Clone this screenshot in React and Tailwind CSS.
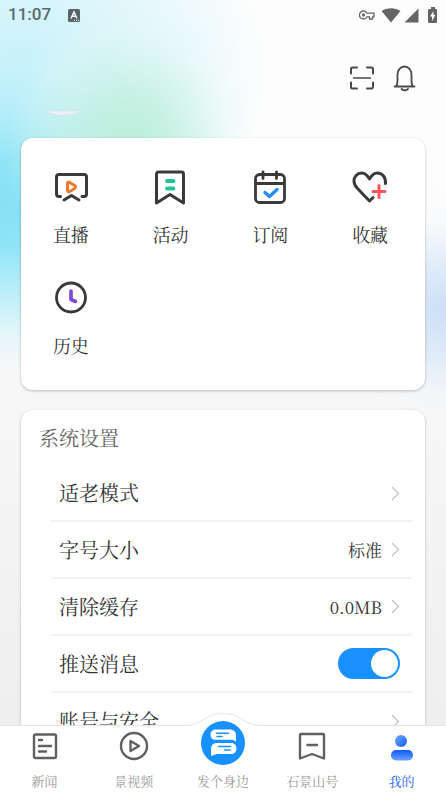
import { useState } from 'react';

const FONT = "font-['Noto_Serif_CJK_SC','Liberation_Serif','Noto_Sans_CJK_SC',serif]";

const stroke = {
    fill: 'none',
    strokeLinecap: 'round',
    strokeLinejoin: 'round',
};

const LiveIcon = () => (
    <svg viewBox="0 0 36 36" className="w-9 h-9" {...stroke} stroke="#3a3a3a" strokeWidth="3">
        <path d="M7.500 27.500H6a2.500 2.500 0 0 1-2.500-2.500V8A2.500 2.500 0 0 1 6 5.500h25A2.500 2.500 0 0 1 33.500 8v17a2.500 2.500 0 0 1-2.500 2.500h-2" />
        <path d="M11 31 18.500 26.500 26 31" />
        <path d="M14.500 14v7.400c0 1.300 1 1.800 2.200 1.200l5-3.200c1.200-.8 1.200-2 0-2.800l-5-3.200c-1.200-.8-2.200-.300-2.200.6z" stroke="#f07a2c" />
    </svg>
);

const ActivityIcon = () => (
    <svg viewBox="0 0 36 36" className="w-9 h-9" {...stroke} stroke="#3a3a3a" strokeWidth="3">
        <path d="M5.500 3h23a2 2 0 0 1 2 2v29L17 25.500 3.500 34V5a2 2 0 0 1 2-2z" />
        <path d="M14 12h6.500M14 19.500h6.500" stroke="#1bc79a" strokeWidth="3.800" />
    </svg>
);

const SubscribeIcon = () => (
    <svg viewBox="0 0 36 36" className="w-9 h-9" {...stroke} stroke="#3a3a3a" strokeWidth="2.800">
        <rect x="3.500" y="5.500" width="29" height="28" rx="4" />
        <path d="M4 14.500h28M11 3v6.500M24.500 3v6.500" />
        <path d="m13 23.500 4.500 4 7.500-7" stroke="#2a8df5" strokeWidth="3.400" />
    </svg>
);

const FavoriteIcon = () => (
    <svg viewBox="0 0 36 36" className="w-9 h-9" {...stroke} stroke="#3a3a3a" strokeWidth="3">
        <path d="M33.500 14.500c.4-6-3-10.500-8.300-10.500-3.200 0-5.700 2.500-7.700 6-2-3.500-4.500-6-7.800-6C5 4 2 7.700 2 12c0 3 1.300 5.200 3.300 7.300L17.500 32l3.500-3.500" />
        <path d="M27 16.500v12M21 22.500h12" stroke="#f8565c" />
    </svg>
);

const HistoryIcon = () => (
    <svg viewBox="0 0 36 36" className="w-9 h-9" {...stroke} stroke="#3a3a3a" strokeWidth="2.800">
        <circle cx="18" cy="17.500" r="14.500" />
        <path d="M18 11v8.500l4.500 2" stroke="#7a4ad9" strokeWidth="3.600" />
    </svg>
);

const shortcuts = [
    { name: '直播', icon: LiveIcon },
    { name: '活动', icon: ActivityIcon },
    { name: '订阅', icon: SubscribeIcon },
    { name: '收藏', icon: FavoriteIcon },
    { name: '历史', icon: HistoryIcon },
];

const NewsIcon = () => (
    <svg viewBox="0 0 30 30" className="w-[30px] h-[30px]" {...stroke} stroke="#606060" strokeWidth="2.400">
        <rect x="4" y="3.500" width="22" height="23.500" rx="1.500" />
        <path d="M9 9h3M9 15h12M9 20.500h7" />
    </svg>
);

const VideoIcon = () => (
    <svg viewBox="0 0 30 30" className="w-[30px] h-[30px]" {...stroke} stroke="#606060" strokeWidth="2.400">
        <circle cx="15" cy="15" r="13" />
        <path d="M11.500 10v10l8.500-5z" />
    </svg>
);

const PostIcon = () => (
    <svg viewBox="0 0 44 44" className="w-11 h-11 -mt-5 -mb-[4px]">
        <circle cx="22" cy="22" r="22" fill="#1890ff" />
        <path d="M14.500 8.500h14C33 8.500 35 11 35 14v6.500L31.500 18.800H14.500c-3 0-5-2.200-5-5.100s2-5.200 5-5.200z" fill="#fff" />
        <path d="M16 22h14.500c3 0 5 2.500 5 5.500S33.500 33 30.500 33H15.500L10 35v-7c0-4 2.500-6 6-6z" fill="#fff" />
        <path d="M15.500 12.200h12M16 15.500h5M17.500 25.500h12M23.500 29h5.500" fill="none" stroke="#1890ff" strokeWidth="1.500" strokeLinecap="round" />
    </svg>
);

const AccountIcon = () => (
    <svg viewBox="0 0 30 30" className="w-[30px] h-[30px]" {...stroke} stroke="#606060" strokeWidth="2.400">
        <path d="M4 3h22a1 1 0 0 1 1 1v23.500L15 23 3 27.500V4a1 1 0 0 1 1-1z" />
        <path d="M10.500 14h9.500" />
    </svg>
);

const MineIcon = () => (
    <svg viewBox="0 0 30 30" className="w-[30px] h-[30px]">
        <defs>
            <linearGradient id="head" x1="0" y1="0" x2="1" y2="1">
                <stop offset="0" stopColor="#7aa8ff" />
                <stop offset="1" stopColor="#0a5cf5" />
            </linearGradient>
            <linearGradient id="body" x1="0" y1="0" x2="0" y2="1">
                <stop offset="0" stopColor="#0a5cf5" />
                <stop offset="1" stopColor="#6ea0ff" />
            </linearGradient>
        </defs>
        <circle cx="15" cy="10" r="6" fill="url(#head)" />
        <rect x="5" y="19" width="22" height="10.500" rx="5" fill="url(#body)" />
    </svg>
);

const tabs = [
    { name: '新闻', icon: NewsIcon },
    { name: '景视频', icon: VideoIcon },
    { name: '发个身边', icon: PostIcon },
    { name: '石景山号', icon: AccountIcon },
    { name: '我的', icon: MineIcon, active: true },
];

const Chevron = () => (
    <svg viewBox="0 0 10 16" className="w-[10px] h-4" fill="none" stroke="#c0c0c0" strokeWidth="1.200">
        <path d="m2 2 6.500 6.500L2 15" />
    </svg>
);

function StatusBar() {
    return (
        <div className="flex items-center justify-between h-[30px] px-2">
            <div className="flex items-center gap-[17px] font-[Roboto,sans-serif] text-[17px] font-medium text-[#5a696e]">
                <span>11:07</span>
                <svg viewBox="0 0 12 13" className="w-3 h-[13px]">
                    <rect width="12" height="13" rx="1.500" fill="#56656a" />
                    <path d="m3 9.500 3-6.500 3 6.500M4.200 7.300h3.600" fill="none" stroke="#fff" strokeWidth="1.400" />
                    <path d="M6 11.300h1M8 11.300h1M10 11.300h1" stroke="#fff" />
                </svg>
            </div>
            <div className="flex items-center text-[#646464]">
                <svg viewBox="0 0 16 10" className="w-4 h-[10px] mr-[6px]" fill="none" stroke="currentColor" strokeWidth="1.300">
                    <path d="M8 3.200A4 4 0 1 0 8 6.800h2.500V9h3V6.800H15V3.200z" />
                    <circle cx="4.500" cy="5" r="1" />
                </svg>
                <svg viewBox="0 0 20 16" className="w-5 h-4 mr-[3px]" fill="currentColor">
                    <path d="M.5 4C6 .2 14 .2 19.500 4L10 15.500z" />
                </svg>
                <svg viewBox="0 0 15 15" className="w-[15px] h-[15px] mr-[9px]" fill="currentColor">
                    <path d="M14.500.5v14H.5z" />
                </svg>
                <svg viewBox="0 0 10 17" className="w-[10px] h-[17px]">
                    <path d="M3 0h4v2h1a1 1 0 0 1 1 1v12a1 1 0 0 1-1 1H1a1 1 0 0 1-1-1V3a1 1 0 0 1 1-1h2z" fill="currentColor" />
                    <path d="M5.500 4 2 9.500H4v4.500L7.500 8H5.500z" fill="#fff" />
                </svg>
            </div>
        </div>
    );
}

function SettingRow({ label, htmlFor, children }) {
    return (
        <li className="flex items-center justify-between h-[57px] pl-2 pr-3 border-b-2 border-[#f2f2f2]">
            {htmlFor ? <label htmlFor={htmlFor}>{label}</label> : <span>{label}</span>}
            {children}
        </li>
    );
}

const LinkValue = ({ label, value }) => (
    <button type="button" aria-label={label} className="flex items-center gap-2 text-[17px]">
        {value}
        <Chevron />
    </button>
);

export default function App() {
    const [push, setPush] = useState(true);

    return (
        <div className={`relative h-screen flex flex-col overflow-hidden text-[#333] bg-linear-to-b from-[#fdfdfd] from-20% to-[#ededed] ${FONT}`}>
            {/* soft colour glows behind the cards */}
            <div className="absolute inset-x-0 top-0 h-[480px] bg-[radial-gradient(ellipse_125px_140px_at_130px_145px,#bcefda_0%,#bfefdccc_30%,#cbf2e490_55%,#e0f7f040_80%,#f0fbf600_100%),radial-gradient(ellipse_230px_170px_at_0px_205px,#86e0f5_0%,#90e4f6_25%,#a8eaf8b0_55%,#c8f2fb50_80%,#e0f7fd00_100%),radial-gradient(ellipse_110px_110px_at_100%_310px,#cbdff7_0%,#d6e6f8aa_45%,#e4effa40_75%,#eef4fa00_100%),radial-gradient(ellipse_250px_220px_at_20px_70px,#c6f1fb_0%,#d4f4fbaa_50%,#e8f8fd00_100%)]"></div>

            <div className="relative">
                <StatusBar />
                <header className="flex justify-end gap-[14px] pt-[34px] pr-7">
                    <button type="button" aria-label="扫一扫">
                        <svg viewBox="0 0 28 28" className="w-7 h-7" {...stroke} stroke="#484848" strokeWidth="2">
                            <path d="M3 9.500V5a1.500 1.500 0 0 1 1.500-1.500H9M19 3.500h4.500A1.500 1.500 0 0 1 25 5v4.500M25 18.500V23a1.500 1.500 0 0 1-1.500 1.500H19M9 24.500H4.500A1.500 1.500 0 0 1 3 23v-4.500" />
                            <path d="M5.500 14h17" strokeWidth="1.300" />
                        </svg>
                    </button>
                    <button type="button" aria-label="消息">
                        <svg viewBox="0 0 28 28" className="w-7 h-7" {...stroke} stroke="#484848" strokeWidth="1.800">
                            <path d="M4.500 22.500h20M6.500 22c1-2 1-4 1-6v-5.500a7 8 0 0 1 14 0V16c0 2 0 4 1 6" />
                            <path d="M11.500 25c2 1.700 4.500 1.700 6.500 0" />
                        </svg>
                    </button>
                </header>
                {/* lower edge of the scrolled avatar */}
                <svg viewBox="0 0 38 6" className="w-[38px] h-[6px] ml-11 mt-[18px]">
                    <path d="M0 1h38C28 6.500 10 6.500 0 1z" fill="#eceef8" stroke="#d5dde4" strokeWidth=".5" />
                </svg>
            </div>

            <main className="relative flex-1 min-h-0 overflow-hidden px-[21px] pt-[22px]">
                <section className="grid grid-cols-4 gap-y-[30px] bg-white rounded-xl pt-[31px] pb-[29px] pr-[5px] shadow-[0_1px_3px_rgba(0,0,0,0.25)]">
                    {shortcuts.map(({ name, icon: Icon }) => (
                        <button key={name} type="button" className="flex flex-col items-center gap-[13px] text-lg leading-8">
                            <Icon />
                            {name}
                        </button>
                    ))}
                </section>

                <section className="mt-5 bg-white rounded-xl pt-3 shadow-[0_1px_3px_rgba(0,0,0,0.25)]">
                    <h2 className="pl-[18px] mb-[11px] text-xl leading-8 text-[#666]">系统设置</h2>
                    <ul className="ml-[30px] mr-[13px] text-xl">
                        <SettingRow label="适老模式">
                            <LinkValue label="适老模式" />
                        </SettingRow>
                        <SettingRow label="字号大小">
                            <LinkValue label="字号大小" value="标准" />
                        </SettingRow>
                        <SettingRow label="清除缓存">
                            <LinkValue label="清除缓存" value="0.0MB" />
                        </SettingRow>
                        <SettingRow label="推送消息" htmlFor="push">
                            <input
                                id="push"
                                type="checkbox"
                                role="switch"
                                checked={push}
                                onChange={(e) => setPush(e.target.checked)}
                                className="flex items-center appearance-none w-[62px] h-[31px] p-[2px] rounded-full bg-[#ccc] checked:bg-[#1890ff] checked:justify-end before:w-[27px] before:h-[27px] before:rounded-full before:bg-white"
                            />
                        </SettingRow>
                        <SettingRow label="账号与安全">
                            <LinkValue label="账号与安全" />
                        </SettingRow>
                    </ul>
                </section>
            </main>

            <nav className="relative grid grid-cols-5 h-[67px] bg-white border-t border-[#e6e6e6]">
                {/* hump behind the middle tab */}
                <svg viewBox="0 0 76 16" className="absolute left-1/2 -translate-x-1/2 -top-[13px] w-[76px] h-4">
                    <path d="M0 13C18 12 20 1 38 1s20 11 38 12v3H0z" fill="#fff" />
                    <path d="M0 12.500C18 12 20 .5 38 .5s20 11.500 38 12" fill="none" stroke="#e6e6e6" />
                </svg>
                {tabs.map(({ name, icon: Icon, active }) => (
                    <a
                        key={name}
                        href="#"
                        className={`relative flex flex-col items-center justify-end gap-[10px] pb-[1px] text-[13px] leading-5 ${active ? 'text-[#1763f0]' : 'text-[#999]'}`}
                    >
                        <Icon />
                        {name}
                    </a>
                ))}
            </nav>
        </div>
    );
}
